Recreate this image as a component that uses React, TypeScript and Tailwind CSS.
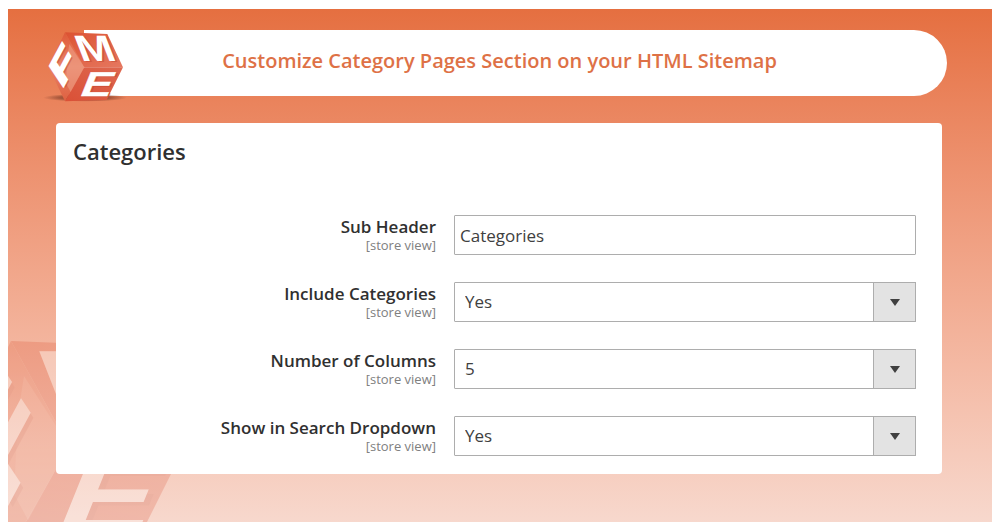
import { useId, useState } from "react";

interface Field {
  id: string;
  label: string;
  type: "text" | "select";
  value: string;
  options?: string[];
}

const fields: Field[] = [
  { id: "sub-header", label: "Sub Header", type: "text", value: "Categories" },
  {
    id: "include-categories",
    label: "Include Categories",
    type: "select",
    value: "Yes",
    options: ["Yes", "No"],
  },
  {
    id: "columns",
    label: "Number of Columns",
    type: "select",
    value: "5",
    options: ["1", "2", "3", "4", "5"],
  },
  {
    id: "search-dropdown",
    label: "Show in Search Dropdown",
    type: "select",
    value: "Yes",
    options: ["Yes", "No"],
  },
];

// One letter per visible face of the cube
const letters = [
  { char: "F", matrix: "matrix(0.72 -1.34 0.6 0.9 96 208)", weight: 5 },
  { char: "M", matrix: "matrix(1.33 0 0.43 1.1 154 123)", weight: 0 },
  { char: "E", matrix: "matrix(1.38 0 -0.42 1.04 145 228)", weight: 1 },
];

function CubeLogo({ className }: { className?: string }) {
  const id = useId();

  return (
    <svg viewBox="0 0 360 300" className={className} aria-hidden="true">
      <defs>
        <linearGradient id={`${id}-left`} x1="0" y1="0" x2="0" y2="1">
          <stop offset="0" stopColor="#df5a38" />
          <stop offset="0.5" stopColor="#e98468" />
          <stop offset="1" stopColor="#de6040" />
        </linearGradient>
        <linearGradient id={`${id}-top`} x1="0" y1="0" x2="1" y2="1">
          <stop offset="0" stopColor="#dc5232" />
          <stop offset="1" stopColor="#e67860" />
        </linearGradient>
        <linearGradient id={`${id}-right`} x1="1" y1="0" x2="0" y2="1">
          <stop offset="0" stopColor="#de6850" />
          <stop offset="1" stopColor="#da5036" />
        </linearGradient>
        <radialGradient id={`${id}-shadow`}>
          <stop offset="0" stopColor="#7a3a26" stopOpacity="0.9" />
          <stop offset="0.6" stopColor="#7a3a26" stopOpacity="0.6" />
          <stop offset="1" stopColor="#7a3a26" stopOpacity="0" />
        </radialGradient>
      </defs>
      <ellipse cx="165" cy="233" rx="126" ry="12" fill={`url(#${id}-shadow)`} />
      <path d="M105 37L163 142L105 244L55 140Z" fill={`url(#${id}-left)`} />
      <path d="M105 37L232 42L279 142H163Z" fill={`url(#${id}-top)`} />
      <path d="M163 142H279L230 240L105 244Z" fill={`url(#${id}-right)`} />
      <path d="M118 72L163 142L122 216L108 190L112 110Z" fill="#f0a48c" opacity="0.5" />
      <g fontFamily="Liberation Sans, sans-serif" fontWeight="700" fontSize="100">
        <g fill="#c2452f" opacity="0.5" transform="translate(6 4)">
          {letters.map(({ char, matrix }) => (
            <text key={char} transform={matrix}>
              {char}
            </text>
          ))}
        </g>
        <g fill="#fff" stroke="#fff">
          {letters.map(({ char, matrix, weight }) => (
            <text key={char} transform={matrix} strokeWidth={weight}>
              {char}
            </text>
          ))}
        </g>
      </g>
    </svg>
  );
}

function FieldRow({ field }: { field: Field }) {
  const [value, setValue] = useState(field.value);

  return (
    <div className="grid grid-cols-[11fr_14fr] gap-[18px]">
      <label htmlFor={field.id} className="text-right">
        <span className="block text-[17px] leading-6 font-semibold text-[#303030]">
          {field.label}
        </span>
        <span className="block text-[13px] leading-3 text-[#808080]">
          [store view]
        </span>
      </label>

      {field.type === "text" ? (
        <input
          id={field.id}
          type="text"
          value={value}
          onChange={(e) => setValue(e.target.value)}
          className="h-10 w-full min-w-0 rounded-[1px] border border-[#adadad] bg-white px-[5px] text-[17px] text-[#404040]"
        />
      ) : (
        <div className="relative">
          <select
            id={field.id}
            value={value}
            onChange={(e) => setValue(e.target.value)}
            className="block h-10 w-full appearance-none rounded-[1px] border border-[#adadad] bg-white pr-12 pl-[10px] text-[17px] text-[#404040]"
          >
            {field.options?.map((option) => (
              <option key={option}>{option}</option>
            ))}
          </select>
          {/* Arrow box */}
          <span className="pointer-events-none absolute inset-y-0 right-0 flex w-[43px] items-center justify-center border border-[#adadad] bg-[#e3e3e3]">
            <svg viewBox="0 0 10 7" className="h-[7px] w-[10px]" aria-hidden="true">
              <path d="M0 0H10L5 7Z" fill="#404040" />
            </svg>
          </span>
        </div>
      )}
    </div>
  );
}

export default function App() {
  return (
    <div className="flex min-h-screen flex-col bg-white px-2 pt-[9px] pb-2 font-['Open_Sans',sans-serif]">
      <main className="relative flex-1 overflow-hidden bg-linear-to-b from-[#e56f40] to-[#f7d8cd] pt-[21px] pr-[50px] pb-12 pl-12">
        {/* Watermark */}
        <CubeLogo className="absolute -bottom-[82px] -left-[102px] w-[360px] opacity-25" />

        {/* Banner */}
        <header className="relative -mr-[5px] ml-7 flex h-[66px] items-center justify-center rounded-r-full rounded-l-[33px] bg-white pr-8 pb-1">
          <CubeLogo className="absolute -top-[10px] -left-[54px] w-[120px]" />
          <h1 className="text-xl leading-6 font-semibold text-[#de7146]">
            Customize Category Pages Section on your HTML Sitemap
          </h1>
        </header>

        {/* Settings card */}
        <section className="relative mt-[27px] rounded-[4px] bg-white pt-3 pr-[26px] pb-[18px] pl-[17px]">
          <h2 className="text-[22px] leading-8 font-semibold text-[#303030]">
            Categories
          </h2>
          <div className="mt-12 flex flex-col gap-[27px]">
            {fields.map((field) => (
              <FieldRow key={field.id} field={field} />
            ))}
          </div>
        </section>
      </main>
    </div>
  );
}
